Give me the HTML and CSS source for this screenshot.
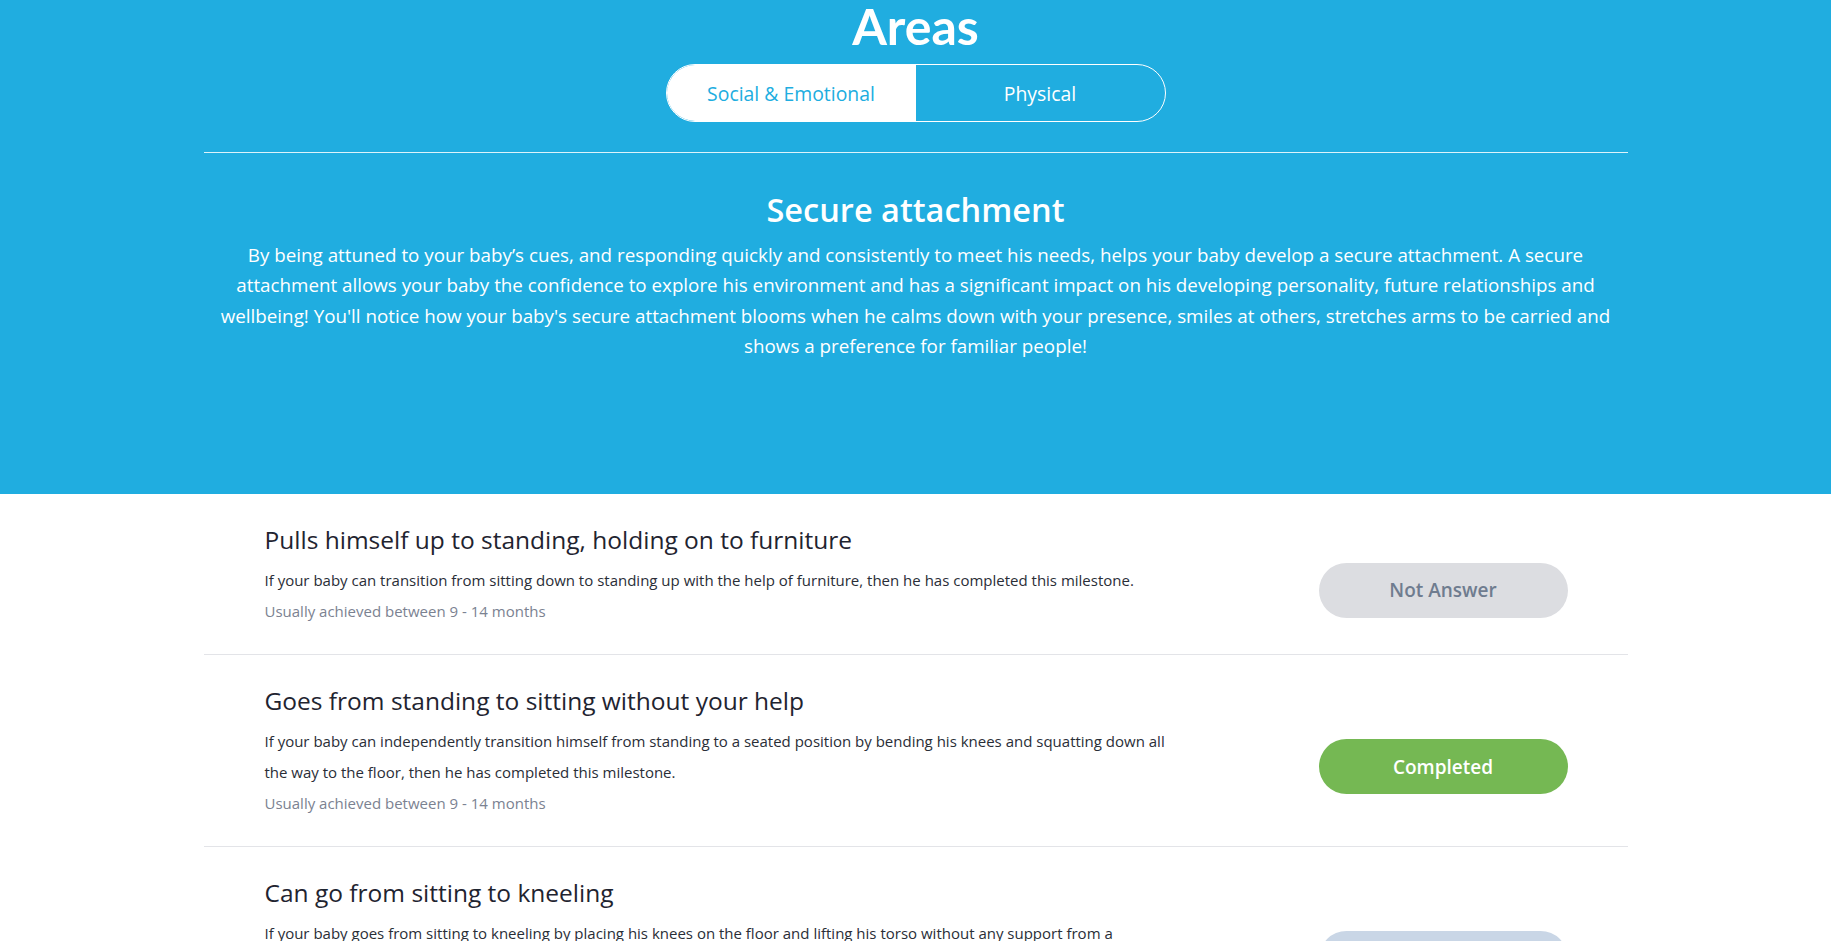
FILE: index.html
```html
<!DOCTYPE html>
<html lang="en">
<head>
<meta charset="utf-8">
<title>Areas</title>
<link rel="stylesheet" href="styles.css">
</head>
<body>
<header class="hero">
  <div class="wrap">
    <h1 class="hero-title">Areas</h1>
    <div class="toggle">
      <button class="toggle-btn active">Social &amp; Emotional</button>
      <button class="toggle-btn">Physical</button>
    </div>
    <hr class="hero-rule">
    <h2 class="section-title">Secure attachment</h2>
    <p class="section-text">By being attuned to your baby’s cues, and responding quickly and consistently to meet his needs, helps your baby develop a secure attachment. A secure attachment allows your baby the confidence to explore his environment and has a significant impact on his developing personality, future relationships and wellbeing! You'll notice how your baby's secure attachment blooms when he calms down with your presence, smiles at others, stretches arms to be carried and shows a preference for familiar people!</p>
  </div>
</header>
<main class="wrap list">
  <div class="row">
    <div class="row-text">
      <h3 class="row-title">Pulls himself up to standing, holding on to furniture</h3>
      <p class="row-desc">If your baby can transition from sitting down to standing up with the help of furniture, then he has completed this milestone.</p>
      <p class="row-age">Usually achieved between 9 - 14 months</p>
    </div>
    <button class="status status-none">Not Answer</button>
  </div>
  <div class="row">
    <div class="row-text">
      <h3 class="row-title">Goes from standing to sitting without your help</h3>
      <p class="row-desc">If your baby can independently transition himself from standing to a seated position by bending his knees and squatting down all the way to the floor, then he has completed this milestone.</p>
      <p class="row-age">Usually achieved between 9 - 14 months</p>
    </div>
    <button class="status status-done">Completed</button>
  </div>
  <div class="row">
    <div class="row-text">
      <h3 class="row-title">Can go from sitting to kneeling</h3>
      <p class="row-desc">If your baby goes from sitting to kneeling by placing his knees on the floor and lifting his torso without any support from a surrounding object, then he has completed this milestone.</p>
      <p class="row-age">Usually achieved between 9 - 14 months</p>
    </div>
    <button class="status status-skip">Not Sure</button>
  </div>
</main>
</body>
</html>
```
FILE: styles.css
```css
* { box-sizing: border-box; }
html, body { margin: 0; padding: 0; }
body {
  font-family: "Open Sans", "Lato", sans-serif;
  background: #ffffff;
  color: #1f2430;
}
.wrap {
  width: 1424px;
  margin: 0 auto;
}
.hero {
  background: #20ade0;
  color: #ffffff;
  height: 494px;
}
.hero-title {
  margin: 0;
  text-align: center;
  font-family: "Lato", "Open Sans", sans-serif;
  font-size: 50px;
  font-weight: 700;
  line-height: 52px;
}
.toggle {
  display: flex;
  width: 500px;
  height: 58px;
  margin: 12px auto 0;
  border: 1px solid #ffffff;
  border-radius: 29px;
  overflow: hidden;
}
.toggle-btn {
  flex: 1;
  border: 0;
  background: transparent;
  color: #ffffff;
  font-family: inherit;
  font-size: 19.4px;
  padding: 0;
}
.toggle-btn.active {
  background: #ffffff;
  color: #20ade0;
}
.hero-rule {
  border: 0;
  border-top: 1px solid rgba(255,255,255,0.85);
  margin: 30px 0 0;
}
.section-title {
  margin: 35px 0 0;
  text-align: center;
  font-size: 32.5px;
  font-weight: 600;
  line-height: 44px;
}
.section-text {
  margin: 8px 0 0;
  text-align: center;
  font-size: 18.8px;
  line-height: 30.4px;
}
.row {
  display: flex;
  align-items: center;
  justify-content: space-between;
  padding: 28px 60px 28px 61px;
  border-bottom: 1px solid #e3e4e8;
}
.row-text {
  width: 910px;
}
.row-title {
  margin: 0 0 7px;
  font-size: 24.5px;
  font-weight: 400;
  line-height: 36px;
  color: #1f2430;
}
.row-desc {
  margin: 0;
  font-size: 15px;
  line-height: 31px;
  color: #2a2e37;
}
.row-age {
  margin: 0;
  font-size: 15px;
  line-height: 30px;
  color: #7b8291;
}
.status {
  width: 249px;
  height: 55px;
  margin-top: 32px;
  border: 0;
  border-radius: 28px;
  font-family: inherit;
  font-size: 19px;
  font-weight: 600;
}
.status-none { background: #dcdde1; color: #6f7c8f; }
.status-done { background: #75b853; color: #ffffff; }
.status-skip { background: #c9d6e6; color: #5b6b80; }
```
